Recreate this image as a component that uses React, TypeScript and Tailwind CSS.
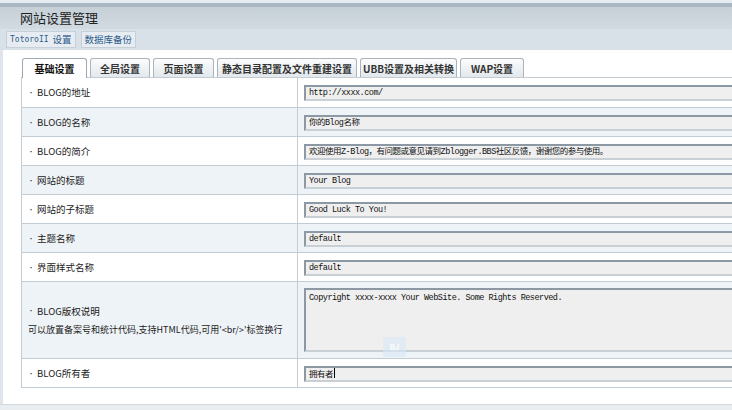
const labelFont = { fontFamily: '"Noto Sans CJK SC", "Liberation Sans", sans-serif' }

type Row = { label: string; value: string; tall?: boolean; note?: string }

const rows: Row[] = [
  { label: 'BLOG的地址', value: 'http://xxxx.com/' },
  { label: 'BLOG的名称', value: '你的Blog名称' },
  { label: 'BLOG的简介', value: '欢迎使用Z-Blog，有问题或意见请到Zblogger.BBS社区反馈，谢谢您的参与使用。' },
  { label: '网站的标题', value: 'Your Blog' },
  { label: '网站的子标题', value: 'Good Luck To You!' },
  { label: '主题名称', value: 'default' },
  { label: '界面样式名称', value: 'default' },
  {
    label: 'BLOG版权说明',
    value: 'Copyright xxxx-xxxx Your WebSite. Some Rights Reserved.',
    tall: true,
    note: "可以放置备案号和统计代码,支持HTML代码,可用'<br/>'标签换行",
  },
  { label: 'BLOG所有者', value: '拥有者' },
]

const tabs = [
  { name: '基础设置', w: 'w-[65px]', active: true },
  { name: '全局设置', w: 'w-[60px]' },
  { name: '页面设置', w: 'w-[61px]' },
  { name: '静态目录配置及文件重建设置', w: 'w-[140px]' },
  { name: 'UBB设置及相关转换', w: 'w-[97px]' },
  { name: 'WAP设置', w: 'w-[64px]' },
]

export default function App() {
  return (
    <div className="w-[732px] h-[410px] overflow-hidden bg-white flex flex-col" style={labelFont}>
      <div className="h-[3px] bg-[#e7eef3]" />
      <div className="h-[4px] bg-[#a8b7c1]" />
      <div className="h-[22px] bg-gradient-to-b from-[#c6d0d7] to-[#d2dbe1] pl-[20px] flex items-center text-[13px] text-[#222]">
        网站设置管理
      </div>
      <div className="h-[21px] bg-[#d9e1e8] flex items-center gap-[5px] pl-[6px]">
        <div className="h-[17px] px-[3px] flex items-center bg-[#e6ecf1] border border-[#c6d0d8] text-[9.5px] text-[#2f5c8c]">
          <span style={{ fontFamily: '"DejaVu Sans Mono", "Noto Sans CJK SC", monospace' }} className="text-[8px] mr-[4px]">TotoroII</span>设置
        </div>
        <div className="h-[17px] px-[3px] flex items-center bg-[#e6ecf1] border border-[#c6d0d8] text-[9.5px] text-[#2f5c8c]">
          数据库备份
        </div>
      </div>

      <div className="flex-1 relative border-l-[3px] border-[#dfe5ea] pl-[18px] pt-[8px] flex flex-col">
        <div className="flex items-end gap-[3px] pl-[1px] h-[19px] relative z-10">
          {tabs.map(t => (
            <div
              key={t.name}
              className={
                t.active
                  ? `${t.w} h-[20px] -mb-[1px] bg-white border border-b-0 border-[#9eaab3] rounded-t-[3px] flex items-center justify-center text-[10px] font-bold text-[#111]`
                  : `${t.w} h-[19px] bg-gradient-to-b from-[#fbfcfd] to-[#e2e8ec] border border-b-0 border-[#a9b4bc] rounded-t-[3px] flex items-center justify-center text-[10px] font-bold text-[#333]`
              }
            >
              {t.name}
            </div>
          ))}
        </div>

        <div className="w-[760px] border border-[#c3ccd3] border-r-0">
          {rows.map((r, i) => (
            <div
              key={r.label}
              className={`grid grid-cols-[276px_1fr] ${i > 0 ? 'border-t border-[#c3ccd3]' : ''} ${i % 2 === 1 ? 'bg-[#eef3f7]' : 'bg-white'} ${r.tall ? 'h-[77px]' : 'h-[29px]'}`}
            >
              <div className="border-r border-[#c3ccd3] pl-[6px] flex flex-col justify-center text-[9.5px] text-[#222]">
                <div className="flex items-center">
                  <span className="text-[6px] mr-[3px]">•</span>
                  {r.label}
                </div>
                {r.note && <div className="mt-[5px] text-[9px]">{r.note}</div>}
              </div>
              <div className={`pl-[6px] flex ${r.tall ? 'items-start pt-[6px]' : 'items-center pt-[1px]'}`}>
                <div
                  className={`w-full border-2 border-t-[#8c99a4] border-l-[#8c99a4] border-b-[#c8d0d6] border-r-[#c8d0d6] bg-[#efefef] pl-[3px] text-[8.5px] leading-[12px] tracking-[-0.5px] text-[#111] whitespace-nowrap ${r.tall ? 'h-[64px] pt-[2px]' : 'h-[16px]'}`}
                  style={{ fontFamily: '"Liberation Mono", "Noto Sans CJK SC", monospace' }}
                >
                  {r.value}
                  {r.label === 'BLOG所有者' && <span className="inline-block w-[1px] h-[10px] bg-black ml-[1px] align-[-1px]" />}
                </div>
              </div>
            </div>
          ))}
        </div>

        <div className="absolute left-[380px] top-[287px] w-[23px] h-[20px] rounded-[3px] bg-[#d9e8f5]/60 flex items-center justify-center text-[8px] font-bold text-white/80">
          BJ
        </div>
      </div>
      <div className="h-[6px] bg-[#e9edf0] border-t border-[#d3dade]" />
    </div>
  )
}
